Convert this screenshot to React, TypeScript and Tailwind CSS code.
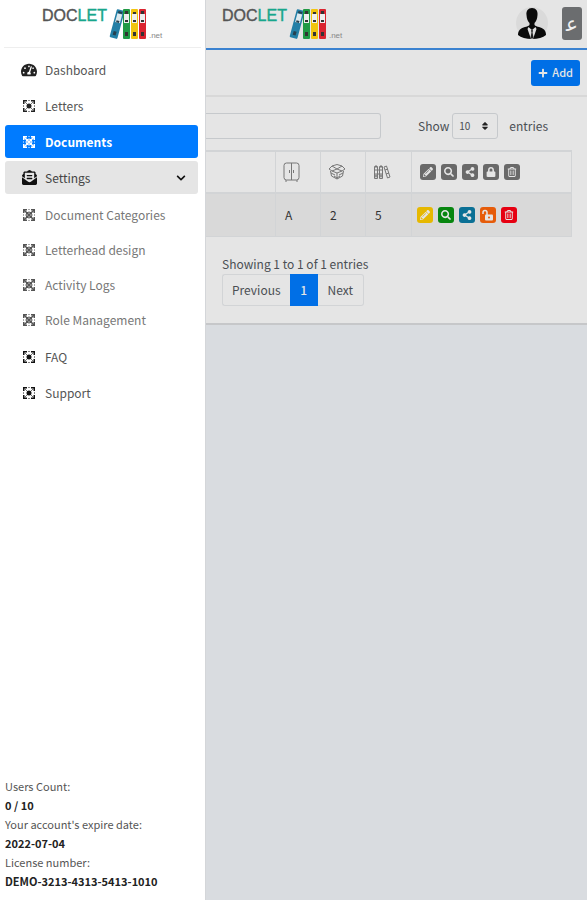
import type { ReactNode } from "react";
import {
  FaTachometerAlt,
  FaEnvelopeOpenText,
  FaChevronDown,
  FaPlus,
  FaPencilAlt,
  FaSearch,
  FaShareAlt,
  FaLock,
  FaSort,
} from "react-icons/fa";
import { FaRegTrashCan } from "react-icons/fa6";

const ACTIONS = [
  { label: "Edit", icon: <FaPencilAlt />, tone: "bg-[#e6b800]" },
  { label: "View", icon: <FaSearch />, tone: "bg-[#07860f]" },
  { label: "Share", icon: <FaShareAlt />, tone: "bg-[#0b7095]" },
  { label: "Unlock", icon: <OpenLockIcon />, tone: "bg-[#e65c0a]" },
  { label: "Delete", icon: <FaRegTrashCan />, tone: "bg-[#e60012]" },
];

const HEAD_ICONS = [
  <FaPencilAlt />,
  <FaSearch />,
  <FaShareAlt />,
  <FaLock />,
  <FaRegTrashCan />,
];

const SETTINGS_LINKS = [
  "Document Categories",
  "Letterhead design",
  "Activity Logs",
  "Role Management",
];

const ACCOUNT = [
  { term: "Users Count:", value: "0 / 10" },
  { term: "Your account's expire date:", value: "2022-07-04" },
  { term: "License number:", value: "DEMO-3213-4313-5413-1010" },
];

export default function App() {
  return (
    <div className="flex min-h-screen bg-[#d9dce0] font-['Noto_Sans_CJK_SC',sans-serif] text-xs text-[#4b4f54]">
      <Sidebar />
      <main className="min-w-0 flex-1">
        <Header />
        <DocumentList />
      </main>
    </div>
  );
}

function Sidebar() {
  return (
    <aside className="flex w-[206px] shrink-0 flex-col border-r border-[#d4d6d9] bg-white">
      <div className="mx-1 flex h-12 border-b border-[#eeeeee] pl-[38px]">
        <Logo />
      </div>
      <nav className="flex flex-col gap-[3px] pt-[5px] pr-[7px] pl-[5px]">
        <NavItem icon={<FaTachometerAlt className="size-4" />} label="Dashboard" tone="text-[#222]" />
        <NavItem icon={<NodesIcon solid />} label="Letters" tone="text-[#222]" />
        <NavItem
          icon={<NodesIcon />}
          label="Documents"
          tone="bg-[#007bff] text-white font-bold"
          active
        />
        <button className="flex h-[33px] items-center rounded-[3px] bg-[#e5e5e5] text-left text-[#444]">
          <span className="ml-3.5 flex w-5 justify-center text-[#111]">
            <FaEnvelopeOpenText className="size-[15px]" />
          </span>
          <span className="ml-1.5 flex-1">Settings</span>
          <FaChevronDown className="mr-3 size-2.5 text-[#111]" />
        </button>
        <div className="mb-px flex flex-col gap-0.5 pt-px">
          {SETTINGS_LINKS.map((label) => (
            <NavItem key={label} icon={<NodesIcon />} label={label} tone="text-[#555]" muted />
          ))}
        </div>
        <NavItem icon={<NodesIcon solid />} label="FAQ" tone="text-[#111]" />
        <NavItem icon={<NodesIcon solid />} label="Support" tone="text-[#111]" />
      </nav>
      <dl className="mt-auto px-[5px] pb-[9px] text-[11px] leading-[19px]">
        {ACCOUNT.map((row) => (
          <div key={row.term}>
            <dt className="text-[#555]">{row.term}</dt>
            <dd className="font-bold text-[#222]">{row.value}</dd>
          </div>
        ))}
      </dl>
    </aside>
  );
}

interface NavItemProps {
  icon: ReactNode;
  label: string;
  tone: string;
  active?: boolean;
  muted?: boolean;
}

function NavItem({ icon, label, tone, active, muted }: NavItemProps) {
  return (
    <a
      href="#"
      aria-current={active ? "page" : undefined}
      className={`flex h-[33px] items-center rounded-[3px] ${tone}`}
    >
      <span className="ml-3.5 flex w-5 justify-center">{icon}</span>
      <span className={`ml-1.5 ${active ? "" : muted ? "text-[#777]" : "text-[#555]"}`}>
        {label}
      </span>
    </a>
  );
}

function Header() {
  return (
    <header className="flex h-[50px] items-start border-b-2 border-[#3b82d0] bg-[#e5e5e5] pl-4 pr-[5px]">
      <Logo />
      <div className="ml-auto flex items-start gap-3.5 pt-[7px]">
        <Avatar />
        <button
          aria-label="Switch to Arabic"
          className="h-[33px] w-5 rounded-[3px] bg-[#6b6d6f] font-['DejaVu_Sans',sans-serif] text-xl leading-[30px] text-[#f0f0f0]"
        >
          ﻋ
        </button>
      </div>
    </header>
  );
}

function DocumentList() {
  return (
    <section className="border-b-2 border-[#c6c7c9] bg-[#e5e5e5] pb-[17px]">
      <div className="flex h-[47px] items-center justify-end border-b-2 border-[#d8d8d8] pr-[7px]">
        <button className="flex h-[26px] items-center gap-1 rounded-[3px] bg-[#006fe6] px-[7px] text-[11px] font-medium text-[#e5e5e5]">
          <FaPlus className="size-2.5" />
          Add
        </button>
      </div>

      <div className="flex items-center pt-4 pr-[39px]">
        <input
          aria-label="Search"
          className="h-[26px] min-w-0 flex-1 rounded-r-[3px] border border-l-0 border-[#c6c9cc] px-2 outline-none"
        />
        <label htmlFor="page-size" className="ml-[37px]">
          Show
        </label>
        <span className="relative ml-[3px]">
          <select
            id="page-size"
            className="h-[26px] w-[46px] appearance-none rounded-[3px] border border-[#c6c9cc] pl-1.5 text-[10px]"
          >
            <option>10</option>
          </select>
          <FaSort className="pointer-events-none absolute top-2 right-2 size-2.5 text-[#222]" />
        </span>
        <span className="ml-[11px]">entries</span>
      </div>

      <div className="pt-[11px] pr-[15px]">
        <table className="w-full table-fixed border-collapse">
          <colgroup>
            <col />
            <col className="w-[45px]" />
            <col className="w-[45px]" />
            <col className="w-[46px]" />
            <col className="w-40" />
          </colgroup>
          <thead>
            <tr className="h-[42px] border-y-2 border-r border-[#d2d4d6]">
              <th />
              <th className="border-l border-[#d2d4d6] pl-[7px]">
                <CabinetIcon />
              </th>
              <th className="border-l border-[#d2d4d6] pl-[7px]">
                <ShelfIcon />
              </th>
              <th className="border-l border-[#d2d4d6] pl-[7px]">
                <FilesIcon />
              </th>
              <th className="border-l border-[#d2d4d6] pl-2">
                <div className="flex gap-[5px]">
                  {HEAD_ICONS.map((icon, i) => (
                    <span
                      key={i}
                      className="flex size-4 items-center justify-center rounded-[3px] bg-[#696969] text-[10px] text-[#e5e5e5]"
                    >
                      {icon}
                    </span>
                  ))}
                </div>
              </th>
            </tr>
          </thead>
          <tbody>
            <tr className="h-[43px] border-r border-b border-[#d2d4d6] bg-[#d9d9d9] text-[#333]">
              <td />
              <td className="border-l border-[#d2d4d6] pl-[9px]">A</td>
              <td className="border-l border-[#d2d4d6] pl-[9px]">2</td>
              <td className="border-l border-[#d2d4d6] pl-[9px]">5</td>
              <td className="border-l border-[#d2d4d6] pl-[5px]">
                <div className="flex gap-[5px]">
                  {ACTIONS.map((action) => (
                    <button
                      key={action.label}
                      aria-label={action.label}
                      className={`flex size-4 items-center justify-center rounded-[3px] text-[10px] text-[#e5e5e5] ${action.tone}`}
                    >
                      {action.icon}
                    </button>
                  ))}
                </div>
              </td>
            </tr>
          </tbody>
        </table>
      </div>

      <div className="pt-[17px] pl-4">
        <p className="leading-5">Showing 1 to 1 of 1 entries</p>
        <nav aria-label="Pagination" className="flex h-8">
          <button className="rounded-l-[3px] border border-r-0 border-[#d2d4d6] px-[9px]">
            Previous
          </button>
          <button aria-current="page" className="w-7 bg-[#006fe6] font-medium text-[#e5e5e5]">
            1
          </button>
          <button className="rounded-r-[3px] border border-l-0 border-[#d2d4d6] px-2.5">
            Next
          </button>
        </nav>
      </div>
    </section>
  );
}

function Logo() {
  return (
    <div className="flex items-start font-['Liberation_Sans',sans-serif]">
      <span className="pt-[7px] text-base leading-[18px] text-[#555] [-webkit-text-stroke:0.4px]">
        DOC<span className="text-[#18a68c]">LET</span>
      </span>
      <svg width="42" height="40" viewBox="0 0 42 40" aria-hidden="true">
        <g transform="translate(10 9) rotate(15)">
          <rect width="8" height="29" rx="1" fill="#237fa6" />
          <rect x="1.5" y="4" width="5" height="9" fill="#dce9ee" />
          <path d="M2 1.5h4v2H2zM2.500 11h3v2h-3zM2.500 22h3v4h-3z" fill="#27404e" />
        </g>
        <rect x="16" y="9" width="7" height="30" rx="1" fill="#219a45" />
        <rect x="24" y="9" width="7" height="30" rx="1" fill="#f2c40f" />
        <rect x="32" y="9" width="7" height="30" rx="1" fill="#da2430" />
        <path d="M17 14h5v9h-5zM25 14h5v9h-5zM33 14h5v9h-5z" fill="#eee" />
        <path
          d="M18 11h3v3h-3zM26 12h3v2h-3zM34 11h3v3h-3zM18 20h3v2h-3zM26 20h3v2h-3zM34 20h3v2h-3zM18 32h3v4h-3zM26 32h3v4h-3zM34 32h3v4h-3z"
          fill="#333"
        />
      </svg>
      <span className="pt-[31px] text-[8px] leading-[9px] text-[#888]">.net</span>
    </div>
  );
}

function Avatar() {
  return (
    <svg width="32" height="34" viewBox="0 0 32 34" role="img" aria-label="Account">
      <circle cx="16" cy="16" r="16" fill="#dadada" />
      <path
        d="M16 1c-4 0-6 3-5.500 7 .2 4 1.500 6.500 3 8v2c-2 2-7 2-9.500 4.500C2.500 24 2 26 2 28c3 2.500 8 4 14 4s11-1.500 14-4c0-2-.5-4-2-5.500-2.500-2.500-7.500-2.500-9.500-4.500v-2c1.500-1.500 2.800-4 3-8C22 4 20 1 16 1z"
        fill="#0a0a0a"
      />
      <path d="M12.500 20 16 23l3.500-3 1 2L17 32h-2l-3.500-10z" fill="#ddd" />
      <path d="m15 23.500 1-.8 1 .8-.5 2 1 5-1.500 1.500-1.500-1.500 1-5z" fill="#222" />
    </svg>
  );
}

function OpenLockIcon() {
  return (
    <svg width="12" height="12" viewBox="0 0 12 12" aria-hidden="true">
      <path d="M1 5V3.500a2 2 0 0 1 4 0V6" fill="none" stroke="currentColor" strokeWidth="1.500" />
      <rect x="3" y="5.500" width="8" height="6" rx="1" fill="currentColor" />
      <circle cx="7" cy="8.500" r="1" fill="#e65c0a" />
    </svg>
  );
}

function NodesIcon({ solid }: { solid?: boolean }) {
  return (
    <svg width="12" height="12" viewBox="0 0 12 12" fill="currentColor" aria-hidden="true">
      <path d="M0 0h4v1.500H1.500V4H0zM8 0h4v4h-1.500V1.500H8zM0 8h1.500v2.500H4V12H0zM10.500 8H12v4H8v-1.500h2.500z" />
      {solid ? (
        <>
          <path d="m2 2 8 8M10 2l-8 8" stroke="currentColor" strokeOpacity=".6" />
          <circle cx="6" cy="6" r="2.500" />
        </>
      ) : (
        <>
          <path d="m1 1 10 10M11 1 1 11" stroke="currentColor" strokeWidth="1.500" />
          <circle cx="6" cy="6" r="3" fillOpacity=".3" stroke="currentColor" />
        </>
      )}
      <path d="M5 0h2v1H5zM5 11h2v1H5zM0 5h1v2H0zM11 5h1v2h-1z" fillOpacity=".5" />
    </svg>
  );
}

function CabinetIcon() {
  return (
    <svg width="17" height="20" viewBox="0 0 17 20" fill="none" stroke="#777" aria-label="Cabinet">
      <rect x="1" y="1" width="15" height="17" rx="2.500" />
      <path d="M8.500 1v17M6.500 8v3M10.500 8v3M3 18v2M14 18v2" />
    </svg>
  );
}

function ShelfIcon() {
  return (
    <svg width="18" height="18" viewBox="0 0 18 18" fill="none" stroke="#777" aria-label="Shelf">
      <path d="m4 3 5-1.500L14 3l3 3-3 2-5 2-5-2-3-2zM4 3l5 3 5-3M4 8l5-2 5 2M9 10v6M2.500 8l1 5L9 16l5.500-3 1-5M3 10l4 2M15 10l-4 2M6 13l3 2 3-2" />
    </svg>
  );
}

function FilesIcon() {
  return (
    <svg width="18" height="16" viewBox="0 0 18 16" fill="none" stroke="#777" aria-label="File">
      <path d="M1.500 2.500h3v12h-3zM6.500 2.500h3v12h-3zM11 3l2.500-1 3.500 11-2.500 1zM1 6h9M1 10h9M12 6l3-1M13 10l3-1M3 1v3M8 1v3" />
      <circle cx="3" cy="12" r="1" />
      <circle cx="8" cy="12" r="1" />
    </svg>
  );
}
